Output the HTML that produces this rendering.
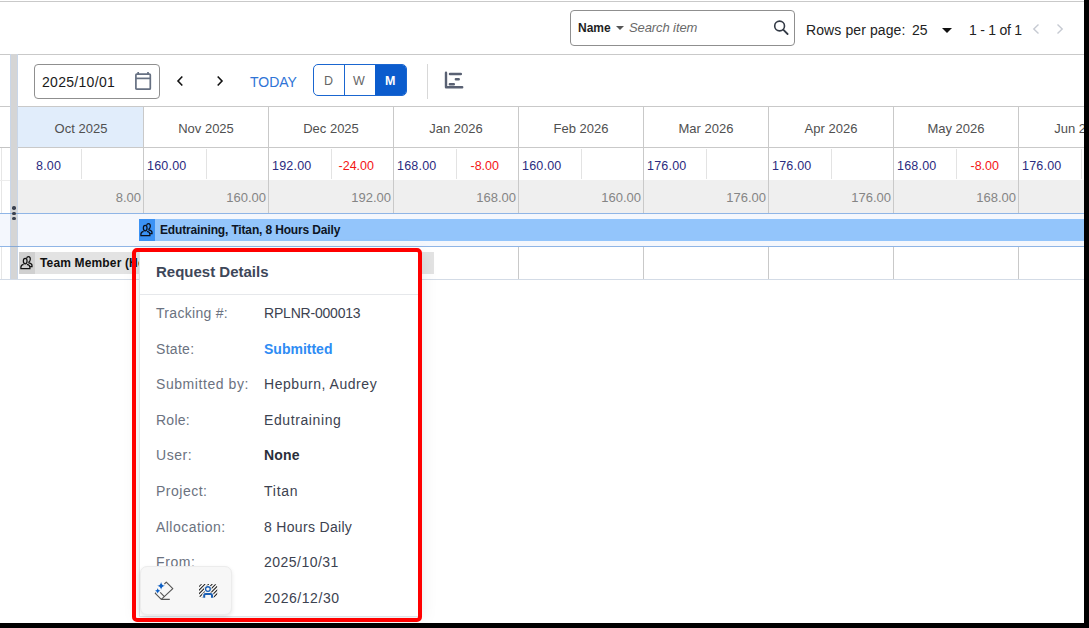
<!DOCTYPE html>
<html><head><meta charset="utf-8">
<style>
*{box-sizing:border-box;margin:0;padding:0}
html,body{width:1089px;height:628px;overflow:hidden;background:#fff;font-family:"Liberation Sans",sans-serif}
.a{position:absolute}
.t{position:absolute;white-space:nowrap;line-height:1}
svg{position:absolute;overflow:visible}
</style></head><body>
<!-- top toolbar -->
<div class="a" style="left:0;top:1px;width:1084px;height:1px;background:#c9c9c9"></div>
<div class="a" style="left:570px;top:10px;width:225px;height:36px;border:1px solid #8f8f8f;border-radius:4px"></div>
<div class="t" style="left:578px;top:22px;font-size:12px;font-weight:bold;color:#1f1f1f">Name</div>
<div class="a" style="left:616px;top:26px;width:0;height:0;border-left:4px solid transparent;border-right:4px solid transparent;border-top:4.5px solid #555"></div>
<div class="t" style="left:629px;top:20.5px;font-size:13px;letter-spacing:-0.1px;font-style:italic;color:#6a6a6a">Search item</div>
<svg style="left:765px;top:14px" width="30" height="26" viewBox="0 0 30 26"><circle cx="14.6" cy="12" r="4.9" fill="none" stroke="#333a46" stroke-width="1.6"/><path d="M18.2 15.6 L22.6 20" stroke="#333a46" stroke-width="1.8" stroke-linecap="round"/></svg>
<div class="t" style="left:806px;top:23px;font-size:14px;letter-spacing:0.1px;color:#222">Rows per page:</div>
<div class="t" style="left:912px;top:23px;font-size:14px;color:#222">25</div>
<div class="a" style="left:942px;top:28px;width:0;height:0;border-left:5px solid transparent;border-right:5px solid transparent;border-top:5px solid #111"></div>
<div class="t" style="left:969px;top:22.5px;font-size:14px;letter-spacing:-0.25px;color:#222">1 - 1 of 1</div>
<svg style="left:1030px;top:22px" width="40" height="14" viewBox="0 0 40 14"><path d="M8.5 2.5 L3.8 7 L8.5 11.5" fill="none" stroke="#c6cad2" stroke-width="1.4"/><path d="M27.5 2.5 L32.2 7 L27.5 11.5" fill="none" stroke="#c6cad2" stroke-width="1.4"/></svg>
<div class="a" style="left:0;top:54px;width:1084px;height:1px;background:#c9c9c9"></div>

<!-- second toolbar -->
<div class="a" style="left:34px;top:64px;width:126px;height:35px;border:1px solid #8f8f8f;border-radius:4px"></div>
<div class="t" style="left:42px;top:74.6px;font-size:14px;letter-spacing:0.3px;color:#1a1a1a">2025/10/01</div>
<svg style="left:134px;top:71px" width="18" height="20" viewBox="0 0 18 20"><rect x="1.9" y="3.1" width="14.4" height="15.1" rx="0.8" fill="none" stroke="#667082" stroke-width="1.7"/><path d="M1.9 7.4 H16.3" stroke="#667082" stroke-width="1.7"/><path d="M4.2 1 V3.5 M14 1 V3.5" stroke="#667082" stroke-width="1.7"/></svg>
<svg style="left:174px;top:74px" width="12" height="14" viewBox="0 0 12 14"><path d="M8.3 2.5 L4 7 L8.3 11.5" fill="none" stroke="#111" stroke-width="1.6"/></svg>
<svg style="left:214px;top:74px" width="12" height="14" viewBox="0 0 12 14"><path d="M3.7 2.5 L8 7 L3.7 11.5" fill="none" stroke="#111" stroke-width="1.6"/></svg>
<div class="t" style="left:250px;top:75px;font-size:14px;color:#2f74d6">TODAY</div>
<div class="a" style="left:313px;top:64px;width:94px;height:32px;border:1px solid #1a66d0;border-radius:5px;overflow:hidden">
  <div class="a" style="left:30px;top:0;width:1px;height:30px;background:#1a66d0"></div>
  <div class="a" style="left:61px;top:0;width:32px;height:30px;background:#0b5ccd"></div>
</div>
<div class="t" style="left:324px;top:74.7px;font-size:12.5px;color:#666">D</div>
<div class="t" style="left:353px;top:74.7px;font-size:12.5px;color:#666">W</div>
<div class="t" style="left:385px;top:74.7px;font-size:12.5px;font-weight:bold;color:#fff">M</div>
<div class="a" style="left:427px;top:64px;width:1px;height:35px;background:#d8d8d8"></div>
<svg style="left:438px;top:66px" width="32" height="28" viewBox="0 0 32 28"><path d="M8 6.8 V21.3 H24.2" fill="none" stroke="#596173" stroke-width="2.4" stroke-linecap="round" stroke-linejoin="round"/><path d="M12 8 H22.8 M17.9 13.2 H20.7 M11.9 18.3 H15.8" stroke="#596173" stroke-width="2.5" stroke-linecap="round"/></svg>
<div class="a" style="left:0;top:106px;width:1084px;height:1px;background:#c9c9c9"></div>

<div class="a" style="left:0;top:147px;width:10px;height:1px;background:#c4c4c4"></div>
<div class="a" style="left:1px;top:148px;width:1px;height:131px;background:#e6e6e6"></div>
<div class="a" style="left:0;top:180px;width:10px;height:1px;background:#ececec"></div>
<div class="a" style="left:18px;top:107px;width:125px;height:40px;background:#e1edfb"></div>
<div class="a" style="left:18px;top:147px;width:1066px;height:1px;background:#c9c9c9"></div>
<div class="a" style="left:18px;top:180px;width:1066px;height:33px;background:#efefef"></div>
<div class="a" style="left:0;top:213px;width:1084px;height:1px;background:#8fb5e6"></div>
<div class="a" style="left:0;top:214px;width:1084px;height:32px;background:#f4f7fd"></div>
<div class="a" style="left:0;top:246px;width:1084px;height:1px;background:#8fb5e6"></div>
<div class="a" style="left:0;top:279px;width:1084px;height:1px;background:#d3dbe6"></div>
<div class="a" style="left:143px;top:107px;width:1px;height:106px;background:#c9c9c9"></div>
<div class="t" style="left:18.5px;top:122px;width:125px;text-align:center;font-size:13px;color:#505050">Oct 2025</div>
<div class="a" style="left:81px;top:149px;width:1px;height:30px;background:#e3e3e3"></div>
<div class="t" style="left:36px;top:160px;font-size:12.5px;letter-spacing:0.2px;color:#2b2b7e">8.00</div>
<div class="t" style="left:18px;top:190.7px;width:123px;text-align:right;font-size:13px;color:#858585">8.00</div>
<div class="a" style="left:268px;top:107px;width:1px;height:106px;background:#c9c9c9"></div>
<div class="t" style="left:143.5px;top:122px;width:125px;text-align:center;font-size:13px;color:#505050">Nov 2025</div>
<div class="a" style="left:206px;top:149px;width:1px;height:30px;background:#e3e3e3"></div>
<div class="t" style="left:147px;top:160px;font-size:12.5px;letter-spacing:0.2px;color:#2b2b7e">160.00</div>
<div class="t" style="left:143px;top:190.7px;width:123px;text-align:right;font-size:13px;color:#858585">160.00</div>
<div class="a" style="left:393px;top:107px;width:1px;height:106px;background:#c9c9c9"></div>
<div class="t" style="left:268.5px;top:122px;width:125px;text-align:center;font-size:13px;color:#505050">Dec 2025</div>
<div class="a" style="left:331px;top:149px;width:1px;height:30px;background:#e3e3e3"></div>
<div class="t" style="left:272px;top:160px;font-size:12.5px;letter-spacing:0.2px;color:#2b2b7e">192.00</div>
<div class="t" style="left:314px;top:160px;width:60px;text-align:right;font-size:12.5px;color:#f41414">-24.00</div>
<div class="t" style="left:268px;top:190.7px;width:123px;text-align:right;font-size:13px;color:#858585">192.00</div>
<div class="a" style="left:518px;top:107px;width:1px;height:106px;background:#c9c9c9"></div>
<div class="a" style="left:518px;top:247px;width:1px;height:32px;background:#c9c9c9"></div>
<div class="t" style="left:393.5px;top:122px;width:125px;text-align:center;font-size:13px;color:#505050">Jan 2026</div>
<div class="a" style="left:456px;top:149px;width:1px;height:30px;background:#e3e3e3"></div>
<div class="t" style="left:397px;top:160px;font-size:12.5px;letter-spacing:0.2px;color:#2b2b7e">168.00</div>
<div class="t" style="left:439px;top:160px;width:60px;text-align:right;font-size:12.5px;color:#f41414">-8.00</div>
<div class="t" style="left:393px;top:190.7px;width:123px;text-align:right;font-size:13px;color:#858585">168.00</div>
<div class="a" style="left:643px;top:107px;width:1px;height:106px;background:#c9c9c9"></div>
<div class="a" style="left:643px;top:247px;width:1px;height:32px;background:#c9c9c9"></div>
<div class="t" style="left:518.5px;top:122px;width:125px;text-align:center;font-size:13px;color:#505050">Feb 2026</div>
<div class="a" style="left:581px;top:149px;width:1px;height:30px;background:#e3e3e3"></div>
<div class="t" style="left:522px;top:160px;font-size:12.5px;letter-spacing:0.2px;color:#2b2b7e">160.00</div>
<div class="t" style="left:518px;top:190.7px;width:123px;text-align:right;font-size:13px;color:#858585">160.00</div>
<div class="a" style="left:768px;top:107px;width:1px;height:106px;background:#c9c9c9"></div>
<div class="a" style="left:768px;top:247px;width:1px;height:32px;background:#c9c9c9"></div>
<div class="t" style="left:643.5px;top:122px;width:125px;text-align:center;font-size:13px;color:#505050">Mar 2026</div>
<div class="a" style="left:706px;top:149px;width:1px;height:30px;background:#e3e3e3"></div>
<div class="t" style="left:647px;top:160px;font-size:12.5px;letter-spacing:0.2px;color:#2b2b7e">176.00</div>
<div class="t" style="left:643px;top:190.7px;width:123px;text-align:right;font-size:13px;color:#858585">176.00</div>
<div class="a" style="left:893px;top:107px;width:1px;height:106px;background:#c9c9c9"></div>
<div class="a" style="left:893px;top:247px;width:1px;height:32px;background:#c9c9c9"></div>
<div class="t" style="left:768.5px;top:122px;width:125px;text-align:center;font-size:13px;color:#505050">Apr 2026</div>
<div class="a" style="left:831px;top:149px;width:1px;height:30px;background:#e3e3e3"></div>
<div class="t" style="left:772px;top:160px;font-size:12.5px;letter-spacing:0.2px;color:#2b2b7e">176.00</div>
<div class="t" style="left:768px;top:190.7px;width:123px;text-align:right;font-size:13px;color:#858585">176.00</div>
<div class="a" style="left:1018px;top:107px;width:1px;height:106px;background:#c9c9c9"></div>
<div class="a" style="left:1018px;top:247px;width:1px;height:32px;background:#c9c9c9"></div>
<div class="t" style="left:893.5px;top:122px;width:125px;text-align:center;font-size:13px;color:#505050">May 2026</div>
<div class="a" style="left:956px;top:149px;width:1px;height:30px;background:#e3e3e3"></div>
<div class="t" style="left:897px;top:160px;font-size:12.5px;letter-spacing:0.2px;color:#2b2b7e">168.00</div>
<div class="t" style="left:939px;top:160px;width:60px;text-align:right;font-size:12.5px;color:#f41414">-8.00</div>
<div class="t" style="left:893px;top:190.7px;width:123px;text-align:right;font-size:13px;color:#858585">168.00</div>
<div class="a" style="left:1143px;top:107px;width:1px;height:106px;background:#c9c9c9"></div>
<div class="a" style="left:1143px;top:247px;width:1px;height:32px;background:#c9c9c9"></div>
<div class="t" style="left:1018.5px;top:122px;width:125px;text-align:center;font-size:13px;color:#505050">Jun 2026</div>
<div class="a" style="left:1081px;top:149px;width:1px;height:30px;background:#e3e3e3"></div>
<div class="t" style="left:1022px;top:160px;font-size:12.5px;letter-spacing:0.2px;color:#2b2b7e">176.00</div>
<div class="a" style="left:139px;top:219px;width:945px;height:22px;background:#93c5fb"></div>
<div class="a" style="left:139px;top:219px;width:16px;height:22px;background:#3b92f4"></div>
<svg style="left:139px;top:219px" width="16" height="22" viewBox="0 0 16 22"><ellipse cx="6.2" cy="9.0" rx="1.85" ry="2.75" fill="none" stroke="#0a0f1a" stroke-width="1.25"/><path d="M4.6 12.3 C2.7 12.8 1.9 13.9 1.9 15.2 V16.6 H10.9 V15.2 C10.9 13.9 10.1 12.8 8 12.3" fill="none" stroke="#0a0f1a" stroke-width="1.25"/><path d="M7.6 6.4 C7.9 5.2 8.6 4.6 9.5 4.6 C10.7 4.6 11.4 5.7 11.3 7.2 C11.2 8.5 10.7 9.5 9.9 10 V10.9 C11.8 11.4 13 12.3 13 13.4 V14.6 H11.1" fill="none" stroke="#0a0f1a" stroke-width="1.25"/></svg>
<div class="t" style="left:160px;top:224px;font-size:12px;font-weight:bold;letter-spacing:-0.15px;color:#0d1524">Edutraining, Titan, 8 Hours Daily</div>
<div class="a" style="left:19px;top:252px;width:415px;height:22px;background:#e3e3e3"></div>
<div class="a" style="left:19px;top:252px;width:16px;height:22px;background:#d0d0d0"></div>
<svg style="left:19px;top:252px" width="16" height="22" viewBox="0 0 16 22"><ellipse cx="6.2" cy="9.0" rx="1.85" ry="2.75" fill="none" stroke="#111" stroke-width="1.25"/><path d="M4.6 12.3 C2.7 12.8 1.9 13.9 1.9 15.2 V16.6 H10.9 V15.2 C10.9 13.9 10.1 12.8 8 12.3" fill="none" stroke="#111" stroke-width="1.25"/><path d="M7.6 6.4 C7.9 5.2 8.6 4.6 9.5 4.6 C10.7 4.6 11.4 5.7 11.3 7.2 C11.2 8.5 10.7 9.5 9.9 10 V10.9 C11.8 11.4 13 12.3 13 13.4 V14.6 H11.1" fill="none" stroke="#111" stroke-width="1.25"/></svg>
<div class="t" style="left:40px;top:257px;font-size:12px;font-weight:bold;letter-spacing:0.15px;color:#111">Team Member (Hepburn)</div>
<div class="a" style="left:10px;top:54px;width:8px;height:225px;background:#d5d5d5;border-left:1px solid #c9d6e8;border-right:1px solid #c9d6e8"></div>
<div class="a" style="left:10px;top:213px;width:9px;height:1px;background:#86a9d6"></div>
<div class="a" style="left:10px;top:246px;width:9px;height:1px;background:#86a9d6"></div>
<div class="a" style="left:12.2px;top:206.3px;width:3.4px;height:3.4px;border-radius:50%;background:#3a4150"></div>
<div class="a" style="left:12.2px;top:211.60000000000002px;width:3.4px;height:3.4px;border-radius:50%;background:#3a4150"></div>
<div class="a" style="left:12.2px;top:216.9px;width:3.4px;height:3.4px;border-radius:50%;background:#3a4150"></div>
<div class="a" style="left:139px;top:252px;width:282px;height:365px;background:#fff;border-left:1px solid #e2e4e8;border-bottom:1px solid #dde3ea;box-shadow:0 2px 16px rgba(0,0,0,0.10)"></div>
<div class="t" style="left:156px;top:263.5px;font-size:15px;font-weight:bold;color:#3e4759">Request Details</div>
<div class="a" style="left:140px;top:294px;width:278px;height:1px;background:#e6e8eb"></div>
<div class="t" style="left:156px;top:305.9px;font-size:14px;letter-spacing:0.3px;color:#6b7280">Tracking #:</div>
<div class="t" style="left:264px;top:305.9px;font-size:14px;letter-spacing:-0.2px;font-weight:normal;color:#3c4250">RPLNR-000013</div>
<div class="t" style="left:156px;top:341.52px;font-size:14px;letter-spacing:0.3px;color:#6b7280">State:</div>
<div class="t" style="left:264px;top:341.52px;font-size:14px;letter-spacing:0px;font-weight:bold;color:#2e8cf4">Submitted</div>
<div class="t" style="left:156px;top:377.15px;font-size:14px;letter-spacing:0.57px;color:#6b7280">Submitted by:</div>
<div class="t" style="left:264px;top:377.15px;font-size:14px;letter-spacing:0.54px;font-weight:normal;color:#3c4250">Hepburn, Audrey</div>
<div class="t" style="left:156px;top:412.77px;font-size:14px;letter-spacing:0.25px;color:#6b7280">Role:</div>
<div class="t" style="left:264px;top:412.77px;font-size:14px;letter-spacing:0.6px;font-weight:normal;color:#3c4250">Edutraining</div>
<div class="t" style="left:156px;top:448.4px;font-size:14px;letter-spacing:0.55px;color:#6b7280">User:</div>
<div class="t" style="left:264px;top:448.4px;font-size:14px;letter-spacing:0.2px;font-weight:bold;color:#2a2f3a">None</div>
<div class="t" style="left:156px;top:484.02px;font-size:14px;letter-spacing:0.5px;color:#6b7280">Project:</div>
<div class="t" style="left:264px;top:484.02px;font-size:14px;letter-spacing:0.75px;font-weight:normal;color:#3c4250">Titan</div>
<div class="t" style="left:156px;top:519.65px;font-size:14px;letter-spacing:0.46px;color:#6b7280">Allocation:</div>
<div class="t" style="left:264px;top:519.65px;font-size:14px;letter-spacing:0.32px;font-weight:normal;color:#3c4250">8 Hours Daily</div>
<div class="t" style="left:156px;top:555.27px;font-size:14px;letter-spacing:0.6px;color:#6b7280">From:</div>
<div class="t" style="left:264px;top:555.27px;font-size:14px;letter-spacing:0.47px;font-weight:normal;color:#3c4250">2025/10/31</div>
<div class="t" style="left:156px;top:590.9px;font-size:14px;letter-spacing:0.5px;color:#6b7280">To:</div>
<div class="t" style="left:264px;top:590.9px;font-size:14px;letter-spacing:0.55px;font-weight:normal;color:#3c4250">2026/12/30</div>
<div class="a" style="left:140px;top:566px;width:92px;height:49px;background:#f7f7f7;border:1px solid #ececec;border-radius:7px;box-shadow:0 2px 4px rgba(0,0,0,0.10)"></div>
<svg style="left:152px;top:579px" width="24" height="24" viewBox="0 0 24 24">
 <path d="M12.4 5 L14.3 3.2 L20.8 9.7 L9.3 20.3 L3.3 14.3 L4 13.6" fill="none" stroke="#555" stroke-width="1.15" stroke-linejoin="round"/>
 <path d="M8.2 13.4 L12.4 17.6 M9.3 20.4 H17.8" fill="none" stroke="#555" stroke-width="1.15"/>
 <path d="M9.1 2.9 Q9.6 6.3 13 6.8 Q9.6 7.3 9.1 10.7 Q8.6 7.3 5.2 6.8 Q8.6 6.3 9.1 2.9Z" fill="#0b5ec4"/>
 <path d="M5.7 9.2 Q6.1 11.4 8.3 11.8 Q6.1 12.2 5.7 14.5 Q5.3 12.2 3.1 11.8 Q5.3 11.4 5.7 9.2Z" fill="#0b5ec4"/>
</svg>
<svg style="left:196px;top:580px" width="24" height="22" viewBox="0 0 24 22">
 <defs><clipPath id="cp"><rect x="3" y="3.9" width="18.2" height="13.8" rx="3"/></clipPath></defs>
 <g clip-path="url(#cp)" stroke="#1a1a1a" stroke-width="1.05">
  <path d="M-12 18 L2 4 M-8.4 18 L5.6 4 M-4.8 18 L9.2 4 M-1.2 18 L12.8 4 M2.4 18 L16.4 4 M6 18 L20 4 M9.6 18 L23.6 4 M13.2 18 L27.2 4 M16.8 18 L30.8 4"/>
 </g>
 <circle cx="11.9" cy="9.1" r="3.9" fill="#f7f7f7"/>
 <rect x="6.3" y="12.4" width="11.3" height="7" rx="2" fill="#f7f7f7"/>
 <circle cx="11.9" cy="9.1" r="2.35" fill="none" stroke="#1a5fb4" stroke-width="1.3"/>
 <path d="M8.2 17.8 V15.2 C8.2 14.4 8.7 14.1 9.6 14.1 H14.5 C15.4 14.1 16 14.4 16 15.2 V17.8" fill="none" stroke="#1a5fb4" stroke-width="2"/>
</svg>
<div class="a" style="left:132px;top:248px;width:290px;height:374px;border:4px solid #ff0000;border-radius:5px"></div>
<div class="a" style="left:1084px;top:0;width:5px;height:628px;background:#000"></div>
<div class="a" style="left:0;top:623px;width:1089px;height:5px;background:#000"></div>
</body></html>
